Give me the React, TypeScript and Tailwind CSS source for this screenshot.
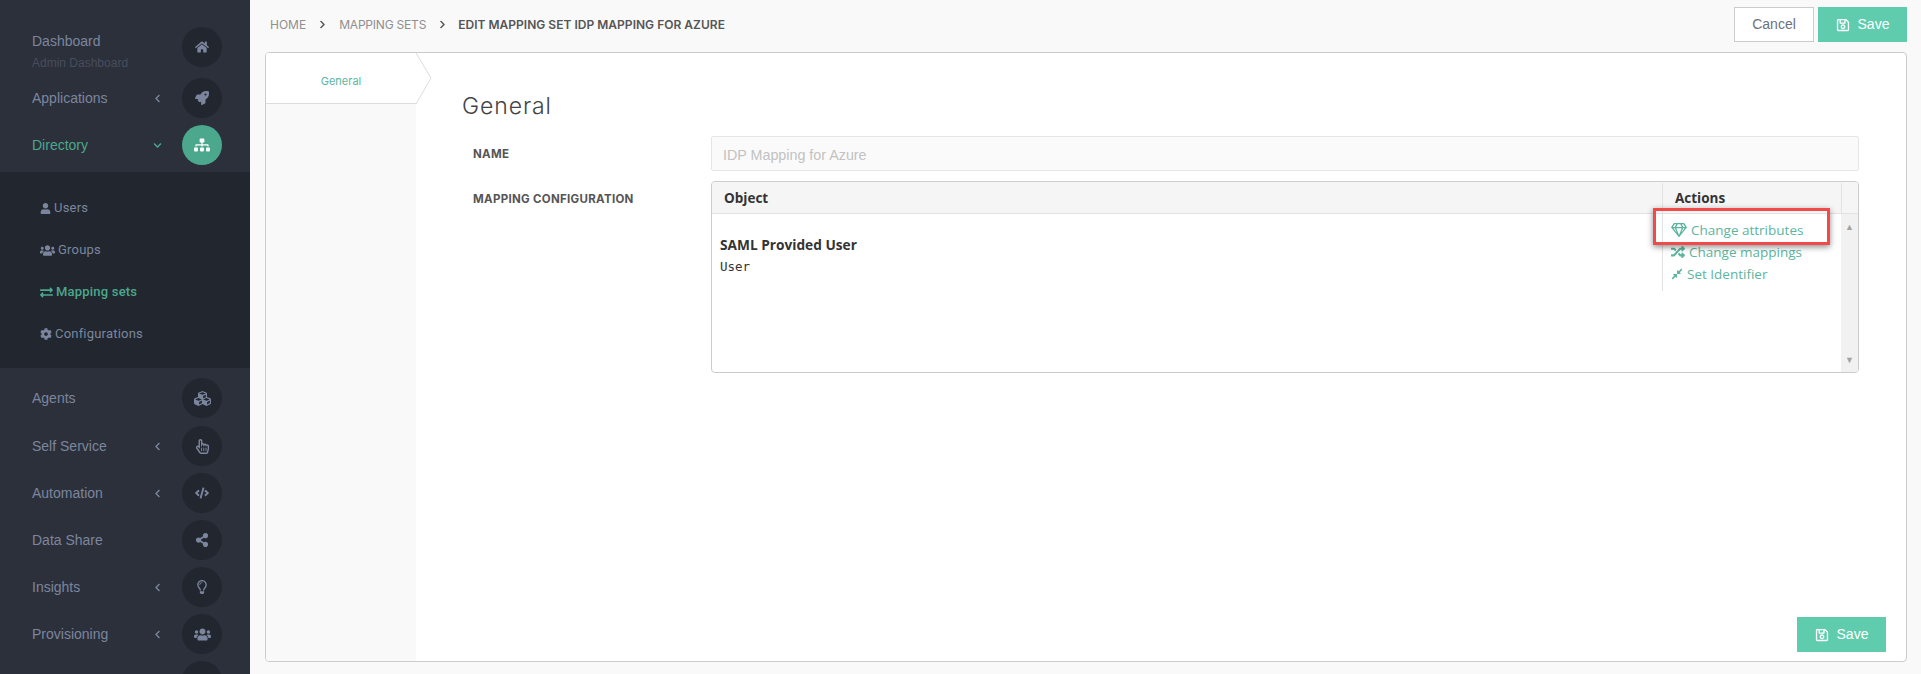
import {
  FaChevronDown,
  FaChevronLeft,
  FaChevronRight,
  FaCode,
  FaCog,
  FaCompressAlt,
  FaCubes,
  FaExchangeAlt,
  FaHome,
  FaRandom,
  FaRegGem,
  FaRegHandPointer,
  FaRegLightbulb,
  FaRegSave,
  FaRocket,
  FaShareAlt,
  FaSitemap,
  FaUser,
  FaUsers,
} from "react-icons/fa";
import type { ReactNode } from "react";

const NavRow = ({
  label,
  icon,
  chevron,
  active,
  sub,
  className = "",
}: {
  label: string;
  icon: ReactNode;
  chevron?: boolean;
  active?: boolean;
  sub?: string;
  className?: string;
}) => (
  <div className={`flex h-10 items-center pl-8 pr-7 ${className}`}>
    <div className={`relative flex-1 ${sub ? "-mt-[12px]" : ""}`}>
      <div className={`text-[14px] ${active ? "text-[#4ba88d]" : "text-[#7b869e]"}`}>{label}</div>
      {sub && <div className="absolute left-0 top-[23px] whitespace-nowrap text-[12px] text-[#474d5c]">{sub}</div>}
    </div>
    {chevron && (
      <span className={`mr-[20px] ${active ? "text-[#4ba88d]" : "text-[#7b869e]"}`}>
        {active ? <FaChevronDown size={9} /> : <FaChevronLeft size={9} />}
      </span>
    )}
    <div
      className={`flex h-10 w-10 items-center justify-center rounded-full text-[14px] ${
        active ? "bg-[#4ba88d] text-white" : "bg-[#22262e] text-[#7b869e]"
      }`}
    >
      {icon}
    </div>
  </div>
);

const SubItem = ({ icon, label, active }: { icon: ReactNode; label: string; active?: boolean }) => (
  <div
    className={`flex h-[42px] items-center gap-[3px] pl-10 font-['Roboto',sans-serif] text-[13px] tracking-[0.2px] ${
      active ? "font-medium text-[#4ba88d]" : "text-[#7b869e]"
    }`}
  >
    {icon}
    <span>{label}</span>
  </div>
);

const SaveButton = () => (
  <button className="flex h-[35px] w-[89px] items-center justify-center gap-[8px] bg-[#5fcdad] text-[14px] text-white">
    <FaRegSave size={14} />
    Save
  </button>
);

const ActionLink = ({ icon, label }: { icon: ReactNode; label: string }) => (
  <div className="flex h-[22px] items-center gap-[4px] text-[#5cb5a0]">
    {icon}
    <span>{label}</span>
  </div>
);

export default function App() {
  return (
    <div className="flex h-[674px] w-full overflow-hidden bg-[#f9f9f9] font-['Liberation_Sans',sans-serif]">
      <aside className="h-full w-[250px] shrink-0 overflow-hidden bg-[#2c303b] pt-[27px]">
        <NavRow label="Dashboard" sub="Admin Dashboard" icon={<FaHome />} />
        <NavRow label="Applications" chevron icon={<FaRocket />} className="mt-[11px]" />
        <NavRow label="Directory" chevron active icon={<FaSitemap size={16} />} className="mt-[7px]" />
        <div className="mt-[7px] h-[196px] bg-[#22262e] pt-[15px]">
          <SubItem icon={<FaUser size={11} />} label="Users" />
          <SubItem icon={<FaUsers size={15} />} label="Groups" />
          <SubItem icon={<FaExchangeAlt size={13} />} label="Mapping sets" active />
          <SubItem icon={<FaCog size={12} />} label="Configurations" />
        </div>
        <div className="mt-[10px] flex flex-col gap-[7px]">
          <NavRow label="Agents" icon={<FaCubes size={17} />} />
          <NavRow label="Self Service" chevron icon={<FaRegHandPointer size={15} />} className="mt-px" />
          <NavRow label="Automation" chevron icon={<FaCode />} />
          <NavRow label="Data Share" icon={<FaShareAlt />} />
          <NavRow label="Insights" chevron icon={<FaRegLightbulb />} />
          <NavRow label="Provisioning" chevron icon={<FaUsers size={17} />} />
          <NavRow label="" icon={null} />
        </div>
      </aside>

      <main className="flex min-w-0 flex-1 flex-col pl-[15px] pr-[14px]">
        <header className="flex h-[52px] shrink-0 items-start justify-between pt-[7px]">
          <nav className="flex h-[35px] items-center pl-[5px] font-['Inter',sans-serif] text-[12px] text-[#8f8f8f]">
            <span>HOME</span>
            <FaChevronRight size={9} className="mx-[12px] text-[#555]" />
            <span className="tracking-[-0.2px]">MAPPING SETS</span>
            <FaChevronRight size={9} className="ml-[12px] mr-[11px] text-[#555]" />
            <span className="font-semibold tracking-[0.02px] text-[#555]">EDIT MAPPING SET IDP MAPPING FOR AZURE</span>
          </nav>
          <div className="flex gap-[4px]">
            <button className="h-[35px] w-[80px] border border-[#ccc] bg-white text-[14px] text-[#6b7280]">Cancel</button>
            <SaveButton />
          </div>
        </header>

        <section className="flex h-[610px] shrink-0 overflow-hidden rounded-[4px] border border-[#ccc] bg-white">
          <div className="relative w-[150px] shrink-0 bg-[#f9f9f9]">
            <div className="flex h-[51px] items-center justify-center border-b border-[#ddd] bg-white pt-[7px] font-['Inter',sans-serif] text-[11px] text-[#5cb5a0]">
              General
            </div>
          </div>
          <div className="relative min-w-0 flex-1 pr-[47px]">
            <svg className="absolute left-0 top-0" width="18" height="52" viewBox="0 0 18 52">
              <path d="M0 0 L15 25 L0 51" fill="#fff" stroke="#ddd" />
            </svg>
            <h2 className="ml-[46px] mt-[38px] h-[30px] font-['Inter',sans-serif] text-[23px] font-light leading-[30px] tracking-[0.9px] text-[#444]">
              General
            </h2>
            <div className="mt-[15px] flex h-[35px] items-center">
              <label className="ml-[57px] w-[238px] shrink-0 self-start pt-[10px] font-['Inter',sans-serif] text-[11.5px] font-bold tracking-[0.3px] text-[#555]">
                NAME
              </label>
              <div className="flex h-[35px] flex-1 items-center rounded-[2px] border border-[#e5e5e5] bg-[#fafafa] pl-[11px] pt-[4px] text-[14.3px] text-[#c2c2c2]">
                IDP Mapping for Azure
              </div>
            </div>
            <div className="mt-[10px] flex">
              <label className="ml-[57px] w-[238px] shrink-0 pt-[10px] font-['Inter',sans-serif] text-[11.5px] font-bold tracking-[0.3px] text-[#555]">
                MAPPING CONFIGURATION
              </label>
              <div className="relative h-[192px] flex-1 overflow-hidden rounded-[4px] border border-[#ccc] font-['Open_Sans',sans-serif] text-[13.5px]">
                <div className="flex h-[32px] border-b border-[#e2e2e2] bg-[#f5f5f5] pt-px font-bold text-[#333]">
                  <div className="flex-1 pl-[12px] leading-[31px]">Object</div>
                  <div className="w-[179px] border-l border-[#e2e2e2] pl-[12px] leading-[31px]">Actions</div>
                  <div className="w-[17px] border-l border-[#e2e2e2]" />
                </div>
                <div className="flex h-[158px]">
                  <div className="flex-1 pl-[8px] pt-[21px] text-[#333]">
                    <div className="text-[13.7px] font-bold leading-[20px]">SAML Provided User</div>
                    <div className="mt-[3px] font-['DejaVu_Sans_Mono',monospace] text-[12.5px] leading-[18px]">User</div>
                  </div>
                  <div className="h-[77px] w-[179px] border-l border-[#e2e2e2] pl-[8px] pt-[5px]">
                    <ActionLink icon={<FaRegGem size={16} />} label="Change attributes" />
                    <ActionLink icon={<FaRandom size={14} />} label="Change mappings" />
                    <ActionLink icon={<FaCompressAlt size={12} />} label="Set Identifier" />
                  </div>
                  <div className="flex w-[17px] flex-col items-center justify-between bg-[#f1f1f1] py-[6px] text-[9px] text-[#a3a3a3]">
                    <span>▲</span>
                    <span>▼</span>
                  </div>
                </div>
              </div>
            </div>
            <div className="absolute bottom-[9px] right-[20px]">
              <SaveButton />
            </div>
            <div className="absolute left-[1237px] top-[155px] h-[37px] w-[177px] border-[3px] border-[#f04a4a] shadow-[0_2px_6px_rgba(0,0,0,0.45)]" />
          </div>
        </section>
      </main>
    </div>
  );
}
